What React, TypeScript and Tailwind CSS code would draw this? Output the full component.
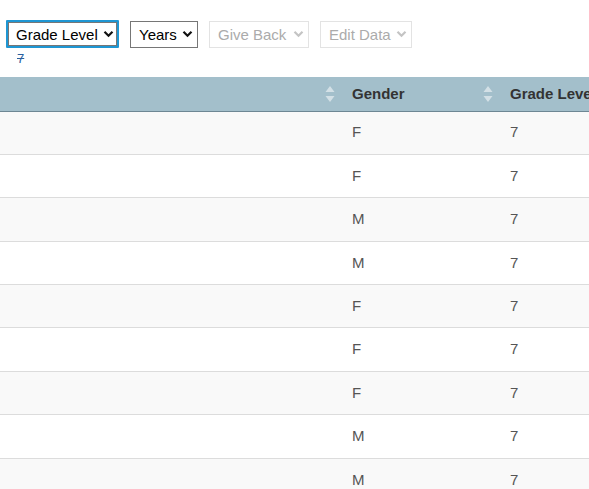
import React from "react";

const genders = ["F", "F", "M", "M", "F", "F", "F", "M", "M"];

const filters = [
  { label: "Grade Level", width: "w-[113px]", focused: true, disabled: false },
  { label: "Years", width: "w-[68px]", focused: false, disabled: false },
  { label: "Give Back", width: "w-[100px]", focused: false, disabled: true },
  { label: "Edit Data", width: "w-[92px]", focused: false, disabled: true },
];

function Chevron({ disabled }: { disabled: boolean }) {
  return (
    <svg
      width="11"
      height="8"
      viewBox="0 0 11 8"
      className="pointer-events-none absolute right-[5px] top-1/2 -translate-y-1/2"
    >
      <path
        d="M1.5 1.8l4 4 4-4"
        fill="none"
        stroke={disabled ? "#c4c4c4" : "#111"}
        strokeWidth="2.2"
      />
    </svg>
  );
}

function SortIcon() {
  return (
    <svg width="10" height="18" viewBox="0 0 10 18" className="absolute right-[5px] top-1/2 -translate-y-1/2">
      <path d="M5 1l4.5 6h-9z" fill="#d3e0e6" />
      <path d="M5 17l4.5-6h-9z" fill="#d3e0e6" />
    </svg>
  );
}

export default function App() {
  return (
    <div className="min-h-screen overflow-hidden bg-white font-['Liberation_Sans',Arial,sans-serif]">
      <div className="flex items-center gap-[11px] pl-[6px] pt-[20px]">
        {filters.map((f) => (
          <div key={f.label} className={`relative ${f.width}`}>
            <select
              disabled={f.disabled}
              defaultValue={f.label}
              className={`w-full appearance-none bg-white pl-[8px] text-[15px] leading-none outline-none ${
                f.focused
                  ? "h-[28px] rounded-[1px] border-2 border-[#1e96d3] pl-[8px] text-black shadow-[inset_0_0_0_1px_#767676]"
                  : f.disabled
                  ? "h-[27px] border border-[#e3e3e3] text-[#ababab]"
                  : "h-[27px] border border-[#767676] text-black"
              }`}
            >
              <option>{f.label}</option>
            </select>
            <Chevron disabled={f.disabled} />
          </div>
        ))}
      </div>

      <div className="pl-[17px] pt-[3px] text-[13px] leading-[16px] text-[#2a5f9e] line-through">
        7
      </div>

      <div className="mt-[10px] w-[589px] overflow-hidden">
        <table className="w-[860px] table-fixed border-collapse text-[15px]">
          <colgroup>
            <col className="w-[340px]" />
            <col className="w-[158px]" />
            <col className="w-[180px]" />
            <col className="w-[182px]" />
          </colgroup>
          <thead>
            <tr className="h-[34px] border-b border-[#6e8794] bg-[#a3bfcb] text-left font-bold text-[#333]">
              <th className="relative px-[12px]">
                <SortIcon />
              </th>
              <th className="relative px-[12px]">
                Gender
                <SortIcon />
              </th>
              <th className="relative whitespace-nowrap px-[12px]">
                Grade Level
                <SortIcon />
              </th>
              <th className="relative px-[12px]"></th>
            </tr>
          </thead>
          <tbody className="text-[#555]">
            {genders.map((g, i) => (
              <tr
                key={i}
                className={`h-[43.4px] border-b border-[#dcdcdc] ${i % 2 === 0 ? "bg-[#f9f9f9]" : "bg-white"}`}
              >
                <td className="px-[12px]"></td>
                <td className="px-[12px]">{g}</td>
                <td className="px-[12px]">7</td>
                <td className="px-[12px]"></td>
              </tr>
            ))}
          </tbody>
        </table>
      </div>
    </div>
  );
}
